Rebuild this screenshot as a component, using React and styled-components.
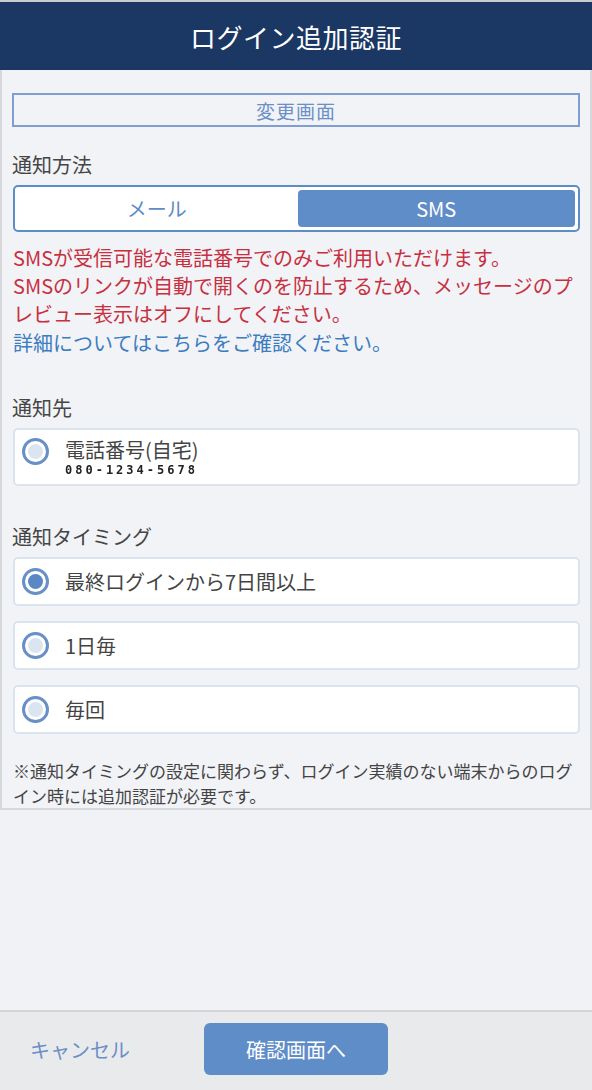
import React, { useState } from 'react';
import styled, { createGlobalStyle } from 'styled-components';

const GlobalStyle = createGlobalStyle`
  html, body {
    margin: 0;
    padding: 0;
    background: #f1f2f6;
    font-family: "Noto Sans CJK JP", "Noto Sans", sans-serif;
  }
`;

const Page = styled.div`
  width: 592px;
  height: 1090px;
  display: flex;
  flex-direction: column;
  border-top: 2px solid #c9cbcf;
  box-sizing: border-box;
  background: #f1f2f6;
`;

const Header = styled.header`
  height: 68px;
  flex: 0 0 68px;
  background: #1b3763;
  color: #fff;
  font-size: 26px;
  display: flex;
  align-items: center;
  justify-content: center;
  letter-spacing: 0.5px;
`;

const Panel = styled.main`
  border: 2px solid #d6d8dc;
  border-top: none;
  background: #f1f3f7;
  padding: 23px 10px 0 10px;
  box-sizing: border-box;
`;

const ModeBox = styled.div`
  height: 34px;
  border: 2px solid #7f9fd2;
  box-sizing: border-box;
  display: flex;
  align-items: center;
  justify-content: center;
  color: #6b8fc6;
  font-size: 19px;
  letter-spacing: 1px;
`;

const Label = styled.div`
  font-size: 20px;
  color: #454545;
  line-height: 28px;
  margin-top: ${p => p.$top || 0}px;
  margin-bottom: 6px;
`;

const Segment = styled.div`
  margin-left: 1px;
  height: 47px;
  border: 2px solid #5d8cc6;
  border-radius: 5px;
  background: #fff;
  box-sizing: border-box;
  display: grid;
  grid-template-columns: 1fr 1fr;
  padding: 3px;
  gap: 2px;
`;

const SegButton = styled.div`
  border-radius: 4px;
  display: flex;
  align-items: center;
  justify-content: center;
  font-size: 20px;
  color: ${p => (p.$active ? '#fff' : '#5d8cc6')};
  background: ${p => (p.$active ? '#5f8dc7' : 'transparent')};
`;

const Notice = styled.p`
  margin: 12px 0 0 1px;
  font-size: 20px;
  line-height: 28px;
  color: #c83040;
`;

const Link = styled.a`
  display: block;
  margin-top: 1px;
  color: #3c7cbf;
  text-decoration: none;
`;

const Card = styled.div`
  margin-left: 1px;
  min-height: ${p => (p.$tall ? 58 : 49)}px;
  margin-bottom: 15px;
  background: #fff;
  border: 2px solid #dbe3ee;
  border-radius: 5px;
  box-sizing: border-box;
  display: flex;
  align-items: center;
  gap: 16px;
  padding: 0 7px;
`;

const Radio = styled.span`
  width: 27px;
  height: 27px;
  flex: 0 0 27px;
  border-radius: 50%;
  border: 3px solid #6690c7;
  box-sizing: border-box;
  display: flex;
  align-items: center;
  justify-content: center;
  align-self: ${p => (p.$top ? 'flex-start' : 'center')};
  margin-top: ${p => (p.$top ? 8 : 0)}px;

  &::after {
    content: '';
    width: 15px;
    height: 15px;
    border-radius: 50%;
    background: ${p => (p.$checked ? '#5b88c4' : '#dbe5f2')};
  }
`;

const CardText = styled.div`
  font-size: 20px;
  color: #444;
  line-height: 26px;
`;

const Masked = styled.div`
  font-family: "DejaVu Sans Mono", monospace;
  font-size: 12px;
  line-height: 14px;
  font-weight: bold;
  color: #222;
  letter-spacing: 3px;
  filter: blur(0.5px);
`;

const Note = styled.p`
  margin: 24px 0 0 1px;
  font-size: 17px;
  line-height: 25px;
  color: #444;
`;

const Spacer = styled.div`
  flex: 1;
`;

const Footer = styled.footer`
  height: 80px;
  flex: 0 0 80px;
  box-sizing: border-box;
  border-top: 2px solid #d3d5d9;
  background: #e9eaec;
  display: flex;
  align-items: center;
  padding: 0 0 4px 30px;
  gap: 74px;
`;

const Cancel = styled.button`
  border: none;
  background: none;
  padding: 0;
  font-family: inherit;
  font-size: 20px;
  color: #6b8fc6;
`;

const Primary = styled.button`
  width: 184px;
  height: 52px;
  border: none;
  border-radius: 6px;
  background: #5f8dc7;
  color: #fff;
  font-family: inherit;
  font-size: 20px;
`;

const timings = ['最終ログインから7日間以上', '1日毎', '毎回'];

export default function App() {
  const [method, setMethod] = useState('sms');
  const [timing, setTiming] = useState(0);

  return (
    <Page>
      <GlobalStyle />
      <Header>ログイン追加認証</Header>
      <Panel>
        <ModeBox>変更画面</ModeBox>
        <Label $top={24}>通知方法</Label>
        <Segment>
          <SegButton $active={method === 'mail'} onClick={() => setMethod('mail')}>メール</SegButton>
          <SegButton $active={method === 'sms'} onClick={() => setMethod('sms')}>SMS</SegButton>
        </Segment>
        <Notice>
          SMSが受信可能な電話番号でのみご利用いただけます。<br />
          SMSのリンクが自動で開くのを防止するため、メッセージのプレビュー表示はオフにしてください。
          <Link href="#">詳細についてはこちらをご確認ください。</Link>
        </Notice>
        <Label $top={37}>通知先</Label>
        <Card $tall>
          <Radio $top />
          <div>
            <CardText>電話番号(自宅)</CardText>
            <Masked>080-1234-5678</Masked>
          </div>
        </Card>
        <Label $top={37}>通知タイミング</Label>
        {timings.map((t, i) => (
          <Card key={t} onClick={() => setTiming(i)}>
            <Radio $checked={timing === i} />
            <CardText>{t}</CardText>
          </Card>
        ))}
        <Note>※通知タイミングの設定に関わらず、ログイン実績のない端末からのログイン時には追加認証が必要です。</Note>
      </Panel>
      <Spacer />
      <Footer>
        <Cancel>キャンセル</Cancel>
        <Primary>確認画面へ</Primary>
      </Footer>
    </Page>
  );
}
